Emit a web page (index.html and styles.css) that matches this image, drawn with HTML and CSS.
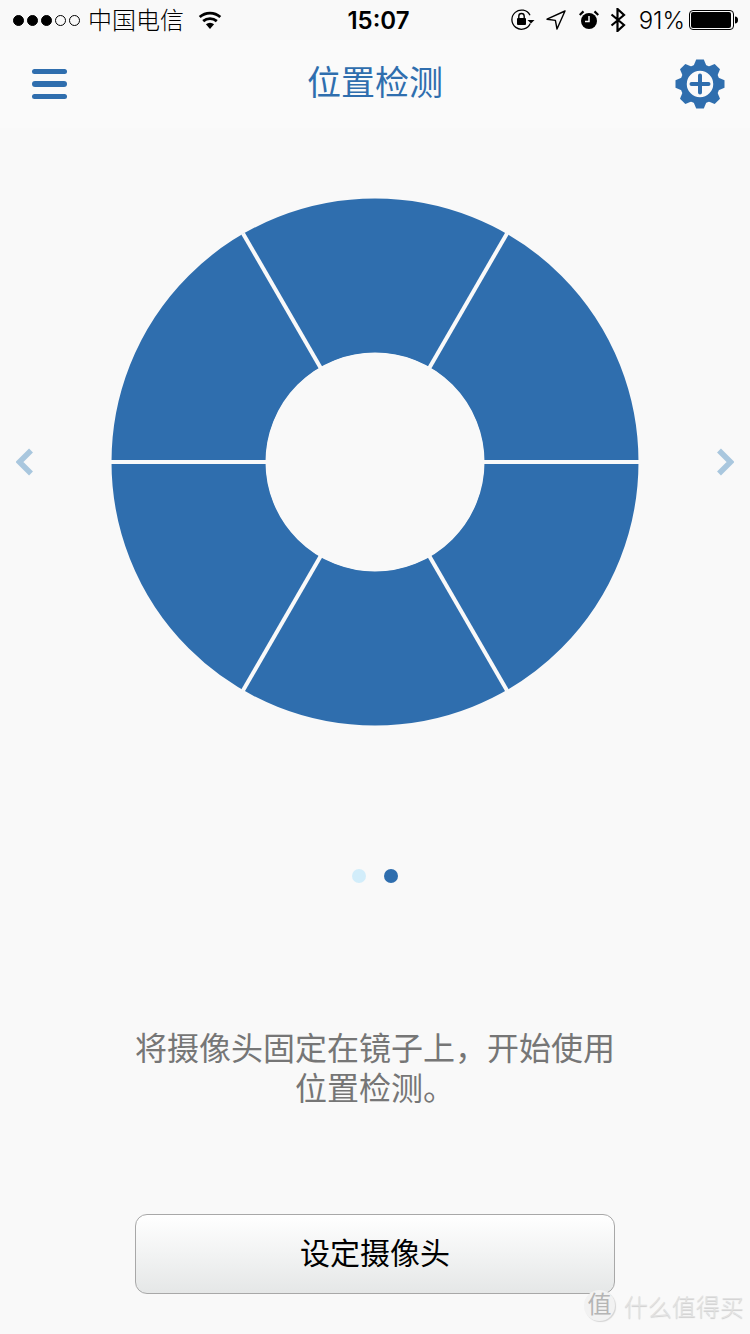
FILE: index.html
```html
<!DOCTYPE html>
<html lang="zh">
<head>
<meta charset="utf-8">
<title>位置检测</title>
<link rel="stylesheet" href="styles.css">
</head>
<body>
<div class="page">
  <header class="status">
    <div class="status-left">
      <div class="signal"><i class="on"></i><i class="on"></i><i class="on"></i><i></i><i></i></div>
      <span class="carrier">中国电信</span>
      <svg class="wifi" width="24" height="18" viewBox="0 0 24 18"><path d="M12 18 7.900 13.200a6.200 6.200 0 0 1 8.200 0Z" fill="#000"/><path d="M5.200 10.100a10.400 10.400 0 0 1 13.600 0M1.700 6a15.600 15.600 0 0 1 20.600 0" fill="none" stroke="#000" stroke-width="2.800"/></svg>
    </div>
    <div class="time">15:07</div>
    <div class="status-right">
      <svg class="ic-lock" width="24" height="22" viewBox="0 0 24 22"><path d="M19.300 14.500A9.600 9.600 0 1 1 19 6.200" fill="none" stroke="#000" stroke-width="1.300"/><path d="M16.500 11h7l-3.500 3.500Z" fill="#000"/><rect x="6" y="9" width="9" height="7" rx="1" fill="#000"/><path d="M7.800 9V7.200a2.700 2.700 0 0 1 5.400 0V9" fill="none" stroke="#000" stroke-width="1.400"/></svg>
      <svg class="ic-loc" width="20" height="20" viewBox="0 0 20 20"><path d="M19 1 1 9.200l8.400 1.200L11 19Z" fill="none" stroke="#000" stroke-width="1.400" stroke-linejoin="round"/></svg>
      <svg class="ic-alarm" width="20" height="20" viewBox="0 0 20 20"><circle cx="10" cy="11" r="8" fill="#000"/><path d="M10 6v5.500H6" fill="none" stroke="#fafafa" stroke-width="1.500"/><path d="M.7 5 4.500 1.400M19.300 5 15.500 1.400" stroke="#000" stroke-width="2.200"/></svg>
      <svg class="ic-bt" width="16" height="24" viewBox="0 0 16 24"><path d="M1.500 6.500 14 17l-6.500 6V1L14 7 1.500 17.500" fill="none" stroke="#000" stroke-width="2.200"/></svg>
      <span class="battery-text">91%</span>
      <svg class="ic-batt" width="49" height="20" viewBox="0 0 49 20"><rect x=".5" y=".5" width="44" height="19" rx="3.500" fill="none" stroke="#000"/><rect x="2" y="2" width="40" height="16" rx="2" fill="#000"/><path d="M46 6.500c2 0 3 1.500 3 3.500s-1 3.500-3 3.500Z" fill="#000"/></svg>
    </div>
  </header>

  <nav class="nav">
    <div class="menu"><i></i><i></i><i></i></div>
    <h1 class="title">位置检测</h1>
    <svg class="gear" width="50" height="50" viewBox="-25 -25 50 50">
      <defs><path id="tooth" d="M-6.500-18-3.800-24.500H3.800L6.500-18Z"/></defs>
      <g fill="#2f6eae">
        <use href="#tooth"/>
        <use href="#tooth" transform="rotate(45)"/>
        <use href="#tooth" transform="rotate(90)"/>
        <use href="#tooth" transform="rotate(135)"/>
        <use href="#tooth" transform="rotate(180)"/>
        <use href="#tooth" transform="rotate(225)"/>
        <use href="#tooth" transform="rotate(270)"/>
        <use href="#tooth" transform="rotate(315)"/>
      </g>
      <circle r="16.500" fill="none" stroke="#2f6eae" stroke-width="6.500"/>
      <path d="M-8.500 0H8.500M0-8.500V8.500" stroke="#2f6eae" stroke-width="4" stroke-linecap="round"/>
    </svg>
  </nav>

  <main class="carousel">
    <svg class="chevron" width="18" height="28" viewBox="0 0 18 28"><path d="M15 2.500 3.500 14 15 25.500" fill="none" stroke="#a9c7de" stroke-width="5.500"/></svg>
    <svg class="wheel" width="528" height="528" viewBox="-264 -264 528 528">
      <circle r="186.500" fill="none" stroke="#2f6eae" stroke-width="154"/>
      <g stroke="#f9f9f9" stroke-width="4">
        <path d="M-264 0H264"/>
        <path d="M-132-228.600 132 228.600"/>
        <path d="M132-228.600-132 228.600"/>
      </g>
      <circle r="109" fill="#f9f9f9"/>
    </svg>
    <svg class="chevron" width="18" height="28" viewBox="0 0 18 28"><path d="M3 2.500 14.500 14 3 25.500" fill="none" stroke="#a9c7de" stroke-width="5.500"/></svg>
  </main>

  <div class="dots"><i class="dot"></i><i class="dot active"></i></div>

  <p class="desc">将摄像头固定在镜子上，开始使用<br>位置检测。</p>

  <button class="cta" type="button">设定摄像头</button>

  <div class="watermark">
    <span class="wm-badge">值</span>
    <span class="wm-text">什么值得买</span>
  </div>
</div>
</body>
</html>
```

FILE: styles.css
```css
* { box-sizing: border-box; }
html, body { margin: 0; padding: 0; }
body {
  background: #f9f9f9;
  font-family: "Noto Sans CJK SC", "Noto Sans", sans-serif;
  overflow: hidden;
}
.page {
  position: relative;
  width: 750px;
  height: 1334px;
  display: flex;
  flex-direction: column;
  align-items: center;
  overflow: hidden;
}
.status {
  width: 100%;
  height: 40px;
  padding: 0 12px 0 13px;
  background: #f9f9f9;
  display: grid;
  grid-template-columns: 1fr auto 1fr;
  align-items: center;
  color: #000;
}
.status-left, .status-right { display: flex; align-items: center; }
.status-right { justify-content: flex-end; }
.signal { display: flex; gap: 3px; }
.signal i {
  width: 11px;
  height: 11px;
  border-radius: 50%;
  border: 1px solid #000;
}
.signal i.on { background: #000; }
.carrier { font-size: 24px; line-height: 38px; height: 40px; margin-left: 8px; font-weight: 300; }
.wifi { margin-left: 14px; }
.time {
  font-family: Inter, sans-serif;
  font-size: 24px;
  font-weight: 600;
  margin-left: 6px;
}
.ic-lock { margin-right: 11px; }
.ic-loc { margin-right: 13px; }
.ic-alarm { margin-right: 11px; }
.ic-bt { margin-right: 13px; }
.battery-text {
  font-family: Inter, sans-serif;
  font-size: 24px;
  font-weight: 300;
  margin-right: 4px;
}
.nav {
  width: 100%;
  height: 88px;
  padding: 0 32px;
  background: #fafafa;
  display: grid;
  grid-template-columns: 1fr auto 1fr;
  align-items: center;
}
.menu { display: flex; flex-direction: column; gap: 7px; width: 35px; }
.menu i { display: block; height: 5.500px; border-radius: 3px; background: #2f6eae; }
.title {
  margin: 0 0 6px;
  font-size: 34px;
  font-weight: 400;
  color: #2f6eae;
  line-height: 48px;
}
.gear { justify-self: end; margin-right: -7px; }
.carousel {
  width: 100%;
  margin-top: 70px;
  padding: 0 16px;
  display: flex;
  align-items: center;
  justify-content: space-between;
}
.wheel { display: block; }
.dots { margin-top: 143px; display: flex; gap: 18px; }
.dot { width: 14px; height: 14px; border-radius: 50%; background: #d2edfa; }
.dot.active { background: #2f6eae; }
.desc {
  margin: 143px 0 0;
  width: 500px;
  text-align: center;
  font-size: 32px;
  line-height: 40px;
  font-weight: 400;
  color: #767676;
}
.cta {
  margin-top: 108px;
  width: 480px;
  height: 80px;
  padding: 0 0 6px;
  border: 1px solid #a8a8a8;
  border-radius: 12px;
  background: linear-gradient(#ffffff 0%, #e5e7e7 100%);
  font-family: inherit;
  font-size: 30px;
  color: #000;
}
.watermark {
  position: absolute;
  left: 584px;
  top: 1290px;
  display: flex;
  align-items: center;
  gap: 9px;
  color: #e2e2e2;
}
.wm-badge {
  width: 31px;
  height: 31px;
  border-radius: 50%;
  background: #f2f2f2;
  box-shadow: 1px 1px 1px rgba(0, 0, 0, .15);
  color: #b5b5b5;
  font-size: 24px;
  line-height: 26px;
  text-align: center;
}
.wm-text {
  font-size: 24px;
  line-height: 30px;
  font-weight: 300;
  text-shadow: 0 1px 1px rgba(0, 0, 0, .18);
}
```
